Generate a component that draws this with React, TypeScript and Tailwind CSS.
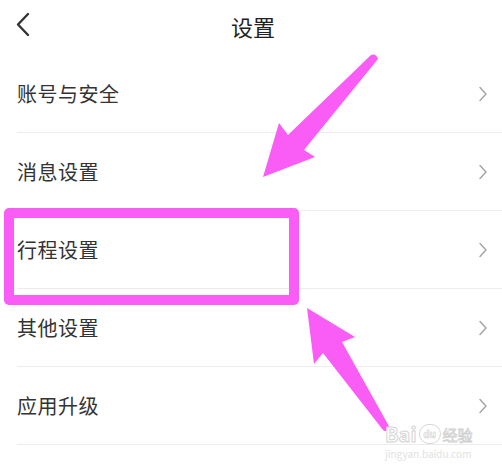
const items = ["账号与安全", "消息设置", "行程设置", "其他设置", "应用升级"];

const ChevronRight = () => (
  <svg width="10" height="16" viewBox="0 0 10 16" fill="none">
    <path d="M2 1.5 L8 8 L2 14.5" stroke="#a6a6a6" strokeWidth="1.5" strokeLinecap="round" strokeLinejoin="round" />
  </svg>
);

const Row = ({ label }: { label: string }) => (
  <div className="ml-[17px] flex h-[78px] items-center justify-between border-b border-[#ececec] pr-[14px]">
    <span className="text-[20px] tracking-[0.5px] text-[#333]">{label}</span>
    <ChevronRight />
  </div>
);

export default function App() {
  return (
    <div
      className="relative h-[467px] w-[502px] overflow-hidden bg-white"
      style={{ fontFamily: '"Noto Sans CJK SC", "Noto Sans", sans-serif' }}
    >
      <div className="relative flex h-[55px] items-center justify-center pb-[3px]">
        <svg className="absolute left-[15px] top-[12px]" width="18" height="26" viewBox="0 0 18 26" fill="none">
          <path d="M13 2 L3 12.5 L13 23" stroke="#333" strokeWidth="2.4" strokeLinecap="round" strokeLinejoin="round" />
        </svg>
        <span className="ml-[4px] text-[22px] text-[#222]">设置</span>
      </div>

      <div className="flex flex-col">
        {items.map((label) => (
          <Row key={label} label={label} />
        ))}
      </div>

      {/* annotation box */}
      <div className="absolute left-[4px] top-[208px] h-[97px] w-[295px] rounded-[5px] border-[10px] border-[#fa5cf6]" />

      {/* annotation arrows */}
      <svg className="absolute left-0 top-0" width="502" height="467" viewBox="0 0 502 467">
        <path d="M371 55 Q376 53 378 59 L304 150 L315 157 L263 177 L279 123 L288 135 Z" fill="#fa5cf6" />
        <path d="M307 308 L355 337 L342 342 L390 428 Q386 433 383 430 L323 353 L314 364 Z" fill="#fa5cf6" />
      </svg>

      {/* watermark */}
      <div className="absolute left-[385px] top-[422px] flex w-[90px] flex-col items-start">
        <div className="flex h-[24px] items-center gap-[2px] leading-none">
          <span className="text-[20px] font-bold text-white [-webkit-text-stroke:1px_#d4d4d4]">Bai</span>
          <span className="flex h-[20px] w-[22px] items-center justify-center rounded-full border border-[#d6d6d6] text-[10px] font-bold text-white [-webkit-text-stroke:0.6px_#cfcfcf]">du</span>
          <span className="text-[15px] text-white [-webkit-text-stroke:0.8px_#d0d0d0]">经验</span>
        </div>
        <span className="mt-[3px] text-[10px] leading-none text-[#e2e2e2]">jingyan.baidu.com</span>
      </div>
    </div>
  );
}
